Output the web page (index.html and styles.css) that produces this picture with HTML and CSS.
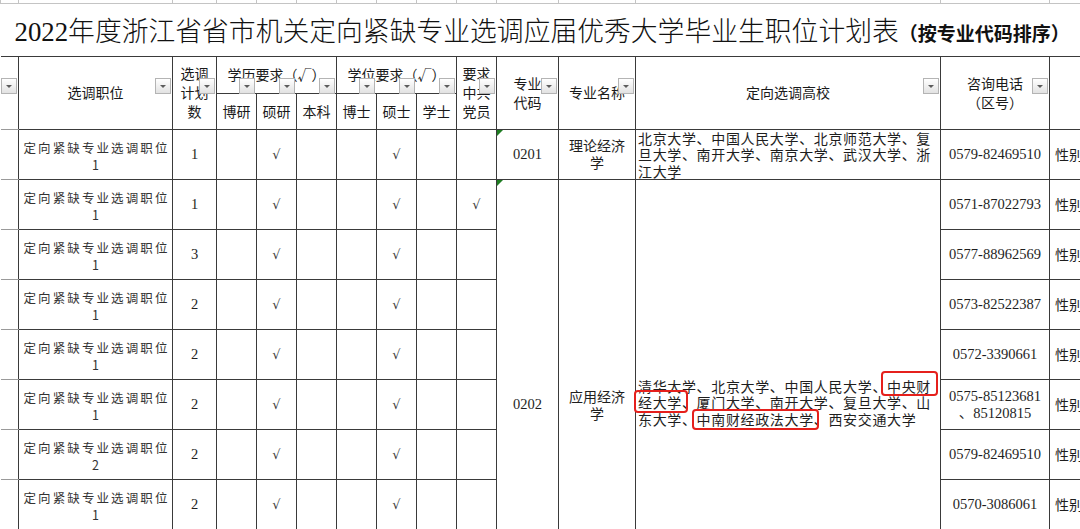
FILE: index.html
```html
<!DOCTYPE html>
<html lang="zh-CN">
<head>
<meta charset="utf-8">
<title>2022年度浙江省省市机关定向紧缺专业选调应届优秀大学毕业生职位计划表</title>
<link rel="stylesheet" href="styles.css">
</head>
<body>
<table class="sheet">
  <colgroup>
    <col class="w-c0"><col class="w-pos"><col class="w-plan">
    <col class="w-sub"><col class="w-sub"><col class="w-sub">
    <col class="w-sub"><col class="w-sub"><col class="w-sub">
    <col class="w-sub">
    <col class="w-code"><col class="w-major"><col class="w-univ"><col class="w-phone"><col class="w-sex">
  </colgroup>
  <tr class="strip">
    <td></td><td></td><td></td><td></td><td></td><td></td><td></td><td></td><td></td><td></td><td></td><td></td><td></td><td></td><td></td>
  </tr>
  <tr class="title-row">
    <td colspan="15" class="title"><span class="t-main">2022年度浙江省省市机关定向紧缺专业选调应届优秀大学毕业生职位计划表</span><span class="t-sub">（按专业代码排序）</span></td>
  </tr>
  <tr class="h1">
    <td rowspan="2" class="hd c0"><span class="dd"></span></td>
    <td rowspan="2" class="hd">选调职位<span class="dd"></span></td>
    <td rowspan="2" class="hd">选调<br>计划<br>数<span class="dd"></span></td>
    <td colspan="3" class="hd grp">学历要求（√）<span class="dd dd-3"></span><span class="dd dd-2"></span><span class="dd"></span></td>
    <td colspan="3" class="hd grp">学位要求（√）<span class="dd dd-3"></span><span class="dd dd-2"></span><span class="dd"></span></td>
    <td rowspan="2" class="hd">要求<br>中共<br>党员<span class="dd"></span></td>
    <td rowspan="2" class="hd">专业<br>代码<span class="dd"></span></td>
    <td rowspan="2" class="hd">专业名称<span class="dd"></span></td>
    <td rowspan="2" class="hd">定向选调高校<span class="dd"></span></td>
    <td rowspan="2" class="hd">咨询电话<br>（区号）<span class="dd"></span></td>
    <td rowspan="2" class="hd"></td>
  </tr>
  <tr class="h2">
    <td class="hd">博研</td><td class="hd">硕研</td><td class="hd">本科</td>
    <td class="hd">博士</td><td class="hd">硕士</td><td class="hd">学士</td>
  </tr>

  <tr class="r">
    <td class="c0"></td>
    <td class="pos">定向紧缺专业选调职位<br>1</td>
    <td class="num">1</td>
    <td></td><td class="chk">√</td><td></td>
    <td></td><td class="chk">√</td><td></td>
    <td></td>
    <td class="code"><span class="tri"></span>0201</td>
    <td class="major">理论经济<br>学</td>
    <td class="univ">北京大学、中国人民大学、北京师范大学、复<br>旦大学、南开大学、南京大学、武汉大学、浙<br>江大学</td>
    <td class="phone">0579-82469510</td>
    <td class="sex">性别</td>
  </tr>
  <tr class="r">
    <td class="c0"></td>
    <td class="pos">定向紧缺专业选调职位<br>1</td>
    <td class="num">1</td>
    <td></td><td class="chk">√</td><td></td>
    <td></td><td class="chk">√</td><td></td>
    <td class="chk">√</td>
    <td rowspan="9" class="code"><span class="tri"></span>0202</td>
    <td rowspan="9" class="major">应用经济<br>学</td>
    <td rowspan="9" class="univ univ-big">清华大学、北京大学、中国人民大学、<span class="mark m1">中央财</span><br><span class="mark m2">经大学</span>、厦门大学、南开大学、复旦大学、山<br>东大学、<span class="mark m3">中南财经政法大学</span>、西安交通大学</td>
    <td class="phone">0571-87022793</td>
    <td class="sex">性别</td>
  </tr>
  <tr class="r">
    <td class="c0"></td>
    <td class="pos">定向紧缺专业选调职位<br>1</td>
    <td class="num">3</td>
    <td></td><td class="chk">√</td><td></td>
    <td></td><td class="chk">√</td><td></td>
    <td></td>
    <td class="phone">0577-88962569</td>
    <td class="sex">性别</td>
  </tr>
  <tr class="r">
    <td class="c0"></td>
    <td class="pos">定向紧缺专业选调职位<br>1</td>
    <td class="num">2</td>
    <td></td><td class="chk">√</td><td></td>
    <td></td><td class="chk">√</td><td></td>
    <td></td>
    <td class="phone">0573-82522387</td>
    <td class="sex">性别</td>
  </tr>
  <tr class="r">
    <td class="c0"></td>
    <td class="pos">定向紧缺专业选调职位<br>1</td>
    <td class="num">2</td>
    <td></td><td class="chk">√</td><td></td>
    <td></td><td class="chk">√</td><td></td>
    <td></td>
    <td class="phone">0572-3390661</td>
    <td class="sex">性别</td>
  </tr>
  <tr class="r">
    <td class="c0"></td>
    <td class="pos">定向紧缺专业选调职位<br>1</td>
    <td class="num">2</td>
    <td></td><td class="chk">√</td><td></td>
    <td></td><td class="chk">√</td><td></td>
    <td></td>
    <td class="phone">0575-85123681<br>、85120815</td>
    <td class="sex">性别</td>
  </tr>
  <tr class="r">
    <td class="c0"></td>
    <td class="pos">定向紧缺专业选调职位<br>2</td>
    <td class="num">2</td>
    <td></td><td class="chk">√</td><td></td>
    <td></td><td class="chk">√</td><td></td>
    <td></td>
    <td class="phone">0579-82469510</td>
    <td class="sex">性别</td>
  </tr>
  <tr class="r">
    <td class="c0"></td>
    <td class="pos">定向紧缺专业选调职位<br>1</td>
    <td class="num">2</td>
    <td></td><td class="chk">√</td><td></td>
    <td></td><td class="chk">√</td><td></td>
    <td></td>
    <td class="phone">0570-3086061</td>
    <td class="sex">性别</td>
  </tr>
  <tr class="r">
    <td class="c0"></td>
    <td class="pos">定向紧缺专业选调职位<br>1</td>
    <td class="num">1</td>
    <td></td><td class="chk">√</td><td></td>
    <td></td><td class="chk">√</td><td></td>
    <td></td>
    <td class="phone">0574-89185092</td>
    <td class="sex">性别</td>
  </tr>
  <tr class="r">
    <td class="c0"></td>
    <td class="pos">定向紧缺专业选调职位<br>1</td>
    <td class="num">1</td>
    <td></td><td class="chk">√</td><td></td>
    <td></td><td class="chk">√</td><td></td>
    <td></td>
    <td class="phone">0576-88205235</td>
    <td class="sex">性别</td>
  </tr>
</table>
</body>
</html>
```
FILE: styles.css
```css
html, body {
  margin: 0;
  padding: 0;
  width: 1080px;
  height: 529px;
  overflow: hidden;
  background: #ffffff;
}

.sheet {
  border-collapse: collapse;
  table-layout: fixed;
  width: 1130px;
  font-family: "Noto Sans CJK SC", sans-serif;
  color: #1e1e1e;
}

.w-c0 { width: 18px; }
.w-pos { width: 154px; }
.w-plan { width: 44px; }
.w-sub { width: 40px; }
.w-code { width: 62px; }
.w-major { width: 77px; }
.w-univ { width: 305px; }
.w-phone { width: 109px; }
.w-sex { width: 81px; }

.sheet td {
  border: 1px solid #3a3a3a;
  padding: 0;
  text-align: center;
  vertical-align: middle;
  font-size: 14px;
  line-height: 19px;
  position: relative;
  overflow: visible;
}

/* previous-row strip at the very top */
.strip { height: 3px; }
.strip td {
  border: 1px solid #c4c4c4;
  border-top: none;
  font-size: 0;
  line-height: 0;
}

.title-row { height: 53px; }
.sheet td.title {
  border-left: none;
  border-right: none;
  border-top: 1px solid #c4c4c4;
  text-align: left;
  padding: 7px 0 0 14px;
  white-space: nowrap;
  line-height: 30px;
  color: #111;
}
.t-main {
  font-family: "Liberation Serif", "Noto Sans CJK SC", serif;
  font-size: 26.8px;
  font-weight: 300;
}
.t-sub {
  font-family: "Noto Sans CJK SC", sans-serif;
  font-size: 19px;
  font-weight: bold;
}

.h1 { height: 37px; }
.h2 { height: 36px; }
.hd { color: #1a1a1a; }
.sheet td.c0 { border-left: none; border-color: #9a9a9a; border-right-color: #3a3a3a; }

/* excel filter dropdown buttons */
.dd {
  position: absolute;
  top: 21px;
  right: 1px;
  width: 14px;
  height: 14px;
  border: 1px solid #b4b4b4;
  background: linear-gradient(#ffffff, #e2e2e2);
}
.dd::after {
  content: "";
  position: absolute;
  left: 4px;
  top: 6px;
  border-left: 3px solid transparent;
  border-right: 3px solid transparent;
  border-top: 3px solid #5c5c5c;
}
.dd-2 { right: 41px; }
.dd-3 { right: 81px; }

.r { height: 50px; }

.sheet td.pos {
  font-size: 12.5px;
  letter-spacing: 2.1px;
  line-height: 17px;
  color: #333;
  padding: 3px 0 0 2px;
}

.num, .code, .phone {
  font-family: "Liberation Serif", "Noto Sans CJK SC", serif;
}
.sheet td.num { font-size: 14.5px; }
.sheet td.code { font-size: 14.5px; }
.sheet td.phone { font-size: 14.5px; line-height: 17px; }

.sheet td.chk {
  font-family: "DejaVu Sans", sans-serif;
  font-size: 13px;
  font-style: italic;
  color: #3a3a3a;
}

.tri {
  position: absolute;
  left: 0;
  top: 0;
  width: 0;
  height: 0;
  border-top: 6px solid #1f7d22;
  border-right: 6px solid transparent;
}

.sheet td.major {
  font-size: 14px;
  line-height: 17px;
}

.sheet td.univ {
  text-align: left;
  padding-left: 2px;
  font-size: 14px;
  letter-spacing: 0.65px;
  line-height: 16.5px;
  white-space: nowrap;
}
.sheet td.univ-big { padding-bottom: 4px; }

.mark { position: relative; }
.mark::before {
  content: "";
  position: absolute;
  border: 2.5px solid #e5201c;
  border-radius: 4px;
}
.m1::before { left: -6px; right: -7px; top: -5px; bottom: 0; }
.m2::before { left: -4px; right: -6px; top: -2px; bottom: -1px; }
.m3::before { left: -5px; right: -5px; top: 0; bottom: -1px; }

.sheet td.sex {
  text-align: left;
  padding-left: 5px;
  font-size: 14px;
}
```
